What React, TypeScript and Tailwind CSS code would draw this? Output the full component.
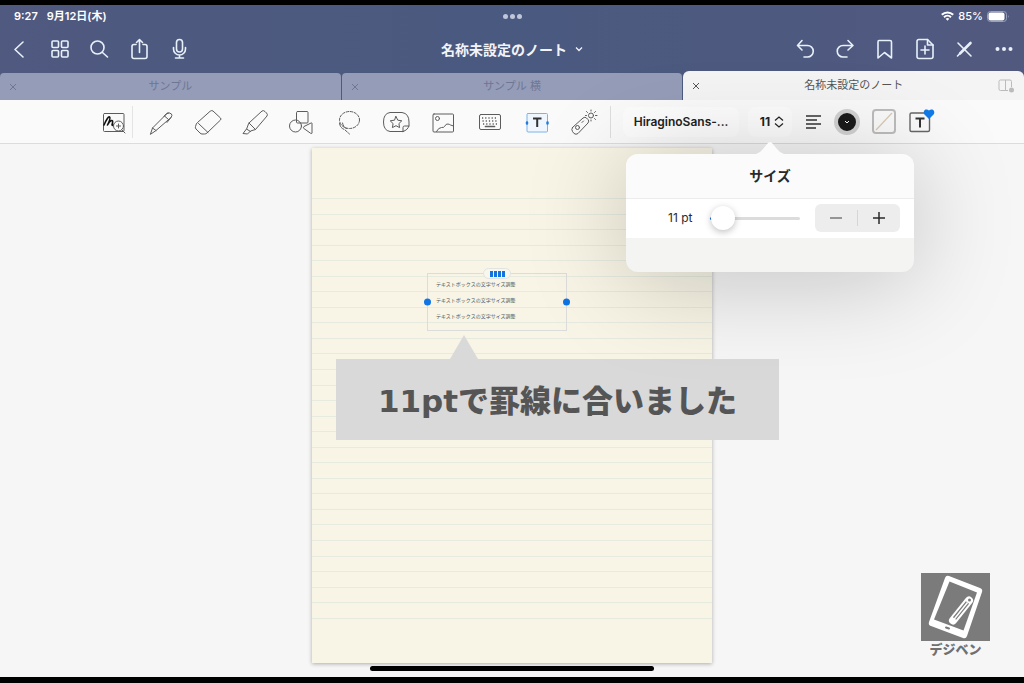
import { useState } from 'react';
import type { ReactNode } from 'react';

type IconProps = {
  children: ReactNode;
  size?: number;
  stroke?: number;
};

const Icon = ({ children, size = 28, stroke = 1 }: IconProps) => (
  <svg
    width={size}
    height={size}
    viewBox="0 0 28 28"
    fill="none"
    stroke="currentColor"
    strokeWidth={stroke}
    strokeLinecap="round"
    strokeLinejoin="round"
    className="shrink-0"
    aria-hidden="true"
  >
    {children}
  </svg>
);

const leftActions = [
  { label: '戻る', icon: <path d="M17 7l-8 7.500 8 7.500" /> },
  {
    label: 'サムネール',
    icon: (
      <>
        <rect x="6" y="6" width="6.500" height="6.500" rx="1" />
        <rect x="15.500" y="6" width="6.500" height="6.500" rx="1" />
        <rect x="6" y="15.500" width="6.500" height="6.500" rx="1" />
        <rect x="15.500" y="15.500" width="6.500" height="6.500" rx="1" />
      </>
    ),
  },
  {
    label: '検索',
    icon: (
      <>
        <circle cx="11.500" cy="12.500" r="6.500" />
        <path d="M16.500 17.500l5 4.500" />
      </>
    ),
  },
  {
    label: '共有',
    icon: (
      <>
        <path d="M10 9.500H8Q6 9.500 6 11.500V21.500Q6 23.500 8 23.500H19Q21 23.500 21 21.500V11.500Q21 9.500 19 9.500H17" />
        <path d="M13.500 17.500V4.500M10.500 7.500l3-3 3 3" />
      </>
    ),
  },
  {
    label: '録音',
    icon: (
      <>
        <rect x="10.500" y="4.500" width="6" height="12.500" rx="3" />
        <path d="M7.500 12.500v1.500a6 6 0 0012 0v-1.500M13.500 20v3M9.500 23h8" />
      </>
    ),
  },
];

const rightActions = [
  { label: '取り消す', icon: <path d="M12 5.500L7.500 10.500l4.500 4.500M7.500 10.500h10a5.500 5.500 0 010 11.500H14" /> },
  { label: 'やり直す', icon: <path d="M18 5.500l5 5-5 4.500M23 10.500H13a5.500 5.500 0 000 11.500H17" /> },
  { label: 'ブックマーク', icon: <path d="M9 5.500H20Q21.500 5.500 21.500 7V23L14.500 17.500 8 23V7Q8 5.500 9 5.500z" /> },
  {
    label: 'ページを追加',
    icon: (
      <>
        <path d="M8.500 4.500H17.500L23 10V21.500Q23 23.500 21 23.500H9Q7 23.500 7 21.500V6.500Q7 4.500 9 4.500z" />
        <path d="M17.500 4.500V10H23M15 11v8M11 15h8" />
      </>
    ),
  },
  {
    label: '編集モード',
    icon: (
      <>
        <path d="M8 8l13 13" />
        <path d="M20.500 8L10 18.500" strokeWidth="2.600" />
        <path d="M9 19.500l-1.500 1.500" />
      </>
    ),
  },
  {
    label: 'その他',
    icon: (
      <g fill="currentColor" stroke="none">
        <circle cx="7.500" cy="14" r="2" />
        <circle cx="14" cy="14" r="2" />
        <circle cx="20.500" cy="14" r="2" />
      </g>
    ),
  },
];

const tools = [
  {
    label: 'ペン',
    icon: (
      <path d="M3.500 26l2-6L19.500 6q2.500-2.500 5 0 1 1.500-.5 3.500L9 22.500zM5.500 20l3.500 2.500M17.500 8l4 3.500M17 8.500l2.500-3q1-1 2-.5M24 9.500l-4 5" />
    ),
  },
  {
    label: '消しゴム',
    icon: (
      <path d="M16.500 3q1.500-1 2.500 0l7.500 7q1 1 0 2L13 25q-1 1-2.500 1H8q-1 0-2-1l-4-4q-1-1-.5-2.500l.5-1.500q0-1 1-2zM4.500 15.500l9.500 9" />
    ),
  },
  {
    label: '蛍光ペン',
    icon: (
      <path d="M8 15L21 3q1.500-1 3 .5l1.500 1.500q1.500 1.500.5 3L14.500 21.500l-5 1.500-3 3-4.500-.5 3.500-4.500zM8 15l6.500 6.500M5.500 21l4 2.500" />
    ),
  },
  {
    label: '図形',
    icon: (
      <>
        <rect x="8.500" y="3.500" width="11.500" height="11.500" rx="1" />
        <circle cx="7.500" cy="18" r="6" />
        <path d="M15.500 20q-.5-1 .5-1.500l7-3.500q1-.5 1 .5V25q0 1-1 .5z" />
      </>
    ),
  },
  {
    label: 'なげなわ',
    icon: (
      <>
        <ellipse cx="14.500" cy="12" rx="10" ry="8.500" strokeDasharray="2.500 1.500" />
        <path d="M4.500 15.500q1 5 5 6l5 4.500M7.500 15q1 4.500 4 5.500" strokeDasharray="3 1.500" />
      </>
    ),
  },
  {
    label: 'ステッカー',
    icon: (
      <>
        <path d="M21 23.500H8q-6.500-1-6.500-9.500T8 4.500H20Q27 5.500 27 14v3.500q-1 4.500-6 6zM21 23.500V19.500q0-1.500 1.500-1.500H27" />
        <path d="M14 8.500l1.800 3.700 4 .6-2.900 2.800.7 4-3.600-1.900-3.600 1.900.7-4-2.900-2.800 4-.6z" />
      </>
    ),
  },
  {
    label: '画像',
    icon: (
      <>
        <rect x="4" y="6" width="20.500" height="18" rx="1" />
        <circle cx="8.500" cy="10.500" r="2" />
        <path d="M7.500 23.500q2-4 5-4t3 -1q1.500-3 3.500-2.500t2.500 1l3 1" />
      </>
    ),
  },
  {
    label: 'キーボード',
    icon: (
      <>
        <rect x="3.500" y="6.500" width="21" height="15" rx="1.500" />
        <path d="M6 10h16M6.500 13h15M7 16h15" strokeWidth="1.700" strokeDasharray="1.200 2" strokeLinecap="butt" />
        <path d="M9.500 18.500h9" strokeWidth="1.700" />
      </>
    ),
  },
  {
    label: 'テキスト',
    icon: (
      <>
        <rect x="4" y="5.500" width="20.500" height="18.500" rx="1" className="fill-[#eff6fd] stroke-[#7db2e8]" />
        <path d="M10 10.500h8.500M14.200 10.500v8.500" strokeWidth="2" strokeLinecap="butt" className="stroke-[#333]" />
        <path d="M4 14.500v1M24.500 14.500v1" strokeWidth="2.500" className="stroke-[#1f7be0]" />
      </>
    ),
  },
  {
    label: 'レーザーポインター',
    icon: (
      <>
        <path d="M2.500 19.500L13 10q2-1.500 3.500 0l1.500 1.500q1.500 1.500 0 3.500L8 25.500q-2 1.500-4 0l-1.500-2q-1.500-2 0-4z" />
        <circle cx="7.500" cy="19.500" r="2" />
        <path d="M12 14.500l1.500-1.500" />
        <circle cx="21" cy="7.500" r="2.500" />
        <path d="M21 3V2M24.500 4.500l1-1M25.500 7.500h1.500M24.500 10.500l1 1M17.500 4.500l-1-1M16.500 7.500h-1M21 12v1" />
      </>
    ),
  },
];

const tabs = [
  { title: 'サンプル', active: false },
  { title: 'サンプル 横', active: false },
  { title: '名称未設定のノート', active: true },
];

const noteLines = ['テキストボックスの文字サイズ調整', 'テキストボックスの文字サイズ調整', 'テキストボックスの文字サイズ調整'];

const StatusBar = () => (
  <div className="grid grid-cols-[1fr_auto_1fr] items-center h-[22px] px-[14px] text-[11px] font-semibold">
    <div className="flex gap-[9px]">
      <span>9:27</span>
      <span>9月12日(木)</span>
    </div>
    <div className="flex gap-[2px]">
      <i className="size-[5px] rounded-full bg-[#bfc6da]" />
      <i className="size-[5px] rounded-full bg-[#bfc6da]" />
      <i className="size-[5px] rounded-full bg-[#bfc6da]" />
    </div>
    <div className="flex items-center justify-end gap-1">
      <svg width="13" height="10" viewBox="0 0 13 10" fill="none" stroke="currentColor" strokeWidth="2" aria-hidden="true">
        <path d="M.8 3.800a8.200 8.200 0 0111.400 0M3 6.200a5 5 0 017 0" />
        <path d="M4.700 7.800L6.500 9.800l1.800-2a2.600 2.600 0 00-3.600 0z" fill="currentColor" stroke="none" />
      </svg>
      <span className="font-medium">85%</span>
      <svg width="23" height="11" viewBox="0 0 23 11" aria-hidden="true">
        <rect x=".5" y=".5" width="19" height="10" rx="3" fill="none" stroke="#98a1bf" />
        <rect x="1.500" y="1.500" width="16" height="8" rx="2" fill="#fff" />
        <path d="M21 4q1.500 1.500 0 3z" fill="#98a1bf" />
      </svg>
    </div>
  </div>
);

const NavBar = () => (
  <div className="grid grid-cols-[1fr_auto_1fr] items-center h-11 text-[#e8f0fa]">
    <div className="flex">
      {leftActions.map((a) => (
        <button key={a.label} aria-label={a.label} className="w-10 flex justify-center">
          <Icon stroke={1.6}>{a.icon}</Icon>
        </button>
      ))}
    </div>
    <button className="flex items-center gap-2 px-9 text-[14px] font-bold text-[#f2f4f9]">
      名称未設定のノート
      <svg width="8" height="6" viewBox="0 0 8 6" fill="none" stroke="currentColor" strokeWidth="1.300" aria-hidden="true">
        <path d="M1 1.500l3 3 3-3" />
      </svg>
    </button>
    <div className="flex justify-end">
      {rightActions.map((a) => (
        <button key={a.label} aria-label={a.label} className="w-10 flex justify-center">
          <Icon stroke={1.6}>{a.icon}</Icon>
        </button>
      ))}
    </div>
  </div>
);

const CloseIcon = () => (
  <svg width="8" height="8" viewBox="0 0 8 8" stroke="currentColor" aria-hidden="true">
    <path d="M1 1l6 6M7 1L1 7" />
  </svg>
);

const Tabs = () => (
  <div className="flex items-end h-[29px] gap-px">
    {tabs.map((tab) => (
      <div
        key={tab.title}
        className={
          tab.active
            ? 'flex flex-1 items-center h-full rounded-t-md bg-[#f4f4f5] text-[#555]'
            : 'flex flex-1 items-center h-[27px] rounded-t-sm bg-[#949cb8] text-[#6e7694]'
        }
      >
        <button aria-label={`${tab.title}を閉じる`} className="w-[26px] flex justify-center">
          <CloseIcon />
        </button>
        <span className="flex-1 text-center text-[11px]">{tab.title}</span>
        {tab.active ? (
          <button aria-label="分割表示" className="w-[26px] text-[#bbb]">
            <svg width="17" height="14" viewBox="0 0 17 14" fill="none" stroke="currentColor" aria-hidden="true">
              <path d="M10 11.500H2.500Q1 11.500 1 10V2.500Q1 1 2.500 1H12Q13.500 1 13.500 2.500V8M7.500 1v10.500" />
              <circle cx="13.500" cy="11" r="2.500" fill="currentColor" stroke="none" />
            </svg>
          </button>
        ) : (
          <span className="w-[26px]" />
        )}
      </div>
    ))}
  </div>
);

type SizePopoverProps = {
  size: number;
  onChange: (size: number) => void;
};

const SizePopover = ({ size, onChange }: SizePopoverProps) => (
  <div className="absolute z-20 top-[47px] left-1/2 -translate-x-1/2 w-72 rounded-xl bg-[#f4f4f3] text-[#2a2a2a] shadow-[0_8px_100px_rgba(0,0,0,0.22)]">
    <svg width="28" height="13" viewBox="0 0 28 13" className="absolute bottom-full left-1/2 -translate-x-1/2" aria-hidden="true">
      <path d="M0 13Q4 12 7 8L12 2Q14 0 16 2L21 8Q24 12 28 13z" fill="#fbfbfb" />
    </svg>
    <h2 className="h-11 flex items-center justify-center rounded-t-xl bg-[#fbfbfb] text-[14px] font-bold">サイズ</h2>
    <div className="h-10 flex items-center border-t border-[#ececec] bg-white pl-[42px] pr-[14px]">
      <label htmlFor="font-size" className="w-[42px] text-xs">
        {size} pt
      </label>
      <input
        id="font-size"
        type="range"
        min={10}
        max={72}
        value={size}
        onChange={(e) => onChange(Number(e.target.value))}
        className="w-[90px] h-[3px] appearance-none rounded-full bg-linear-to-r from-[#1667d9] from-3% to-[#dcdcdf] to-3% [&::-webkit-slider-thumb]:appearance-none [&::-webkit-slider-thumb]:size-6 [&::-webkit-slider-thumb]:rounded-full [&::-webkit-slider-thumb]:bg-white [&::-webkit-slider-thumb]:shadow-[0_2px_7px_rgba(0,0,0,0.25)]"
      />
      <div className="ml-auto flex items-center h-7 w-[85px] rounded-md bg-[#ededee]">
        <button aria-label="小さく" onClick={() => onChange(size - 1)} className="flex-1 flex justify-center text-[#777]">
          <svg width="14" height="14" viewBox="0 0 14 14" stroke="currentColor" strokeWidth="1.500" aria-hidden="true">
            <path d="M1 7h12" />
          </svg>
        </button>
        <span className="w-px h-4 bg-[#d6d6d8]" />
        <button aria-label="大きく" onClick={() => onChange(size + 1)} className="flex-1 flex justify-center">
          <svg width="14" height="14" viewBox="0 0 14 14" stroke="currentColor" strokeWidth="1.500" aria-hidden="true">
            <path d="M1 7h12M7 1v12" />
          </svg>
        </button>
      </div>
    </div>
    <div className="h-[34px]" />
  </div>
);

const Toolbar = () => {
  const [size, setSize] = useState(11);

  return (
    <div className="relative z-10 h-11 flex items-center justify-center pl-[10px] bg-[#fafafa] border-b border-[#dcdcdc] text-[#5c5c5c]">
      <button aria-label="拡大ウインドウ" className="w-8 shrink-0 flex justify-center">
        <Icon>
          <rect x="3.500" y="5.500" width="20.500" height="18" rx="1" />
          <path d="M4 17q4-9 5.500-8t-2 8q2-4 4-4.500t.5 4.500q1 1 2-.5" strokeWidth="1.600" className="stroke-[#111]" />
          <circle cx="18.500" cy="18" r="5" className="fill-[#fafafa]" />
          <path d="M22 22l3 3M16.500 18h4M18.500 16v4" />
        </Icon>
      </button>
      <span className="w-px h-8 ml-[2px] mr-1 bg-[#e4e4e4]" />
      {tools.map((t) => (
        <button key={t.label} aria-label={t.label} className="w-[47px] shrink-0 flex justify-center">
          <Icon>{t.icon}</Icon>
        </button>
      ))}
      <span className="w-px h-8 ml-[3px] mr-3 bg-[#dedede]" />
      <button className="w-[116px] h-[30px] shrink-0 rounded-lg bg-[#fdfdfd] text-xs font-semibold text-[#222]">HiraginoSans-...</button>
      <div className="relative ml-[9px]">
        <button className="flex items-center justify-center gap-1 w-11 h-[30px] pl-1 rounded-lg bg-[#fdfdfd] text-xs font-bold text-[#222]">
          {size}
          <svg width="10" height="12" viewBox="0 0 10 12" fill="none" stroke="currentColor" strokeWidth="1.200" aria-hidden="true">
            <path d="M1 4.500L5 1l4 3.500M1 7.500L5 11l4-3.500" />
          </svg>
        </button>
        <SizePopover size={size} onChange={setSize} />
      </div>
      <button aria-label="行揃え" className="ml-[14px] shrink-0 text-[#333]">
        <svg width="16" height="14" viewBox="0 0 16 14" stroke="currentColor" strokeWidth="1.300" aria-hidden="true">
          <path d="M0 1h15M0 5h11M0 9h15M0 13h10" />
        </svg>
      </button>
      <button aria-label="文字の色" className="ml-3 size-[26px] shrink-0 flex items-center justify-center rounded-full border-4 border-[#d2d2d2] bg-[#1b1b1b] text-white">
        <svg width="6" height="4" viewBox="0 0 6 4" fill="none" stroke="currentColor" aria-hidden="true">
          <path d="M1 1l2 2 2-2" />
        </svg>
      </button>
      <button aria-label="背景色" className="ml-3 shrink-0">
        <svg width="24" height="25" viewBox="0 0 24 25" fill="none" aria-hidden="true">
          <rect x="1" y="1" width="22" height="23" rx="3" stroke="#bdbdbd" strokeWidth="2" />
          <path d="M4 21L20 4" stroke="#d8cbb5" strokeWidth="1.200" />
        </svg>
      </button>
      <button aria-label="テキストスタイル" className="ml-3 shrink-0">
        <svg width="28" height="28" viewBox="0 0 28 28" fill="none" aria-hidden="true">
          <rect x="2" y="5" width="19.500" height="18.500" rx="1.500" stroke="#666" strokeWidth="1.400" />
          <path d="M7.500 10.500h9M12 10.500v9" stroke="#333" strokeWidth="2" />
          <path d="M21 11l-5-5q-1-3 1.500-4.500 2-.5 3.500 1 1.500-1.500 3.500-1 2.500 1.500 1.500 4.500z" fill="#117be8" />
        </svg>
      </button>
    </div>
  );
};

const SelectedTextBox = () => (
  <div className="absolute top-[125px] left-[115px] w-[140px] border border-[#dcdcdc] pt-[3px] pb-[5px] pl-2 text-[5px] text-[#555]">
    <div className="absolute -top-[6px] left-1/2 -translate-x-1/2 flex items-center justify-center gap-[1px] w-7 h-[11px] rounded-full border border-[#e2e4e2] bg-[#f7f7ee]">
      <i className="w-[3px] h-[6px] bg-[#1473dd]" />
      <i className="w-[3px] h-[6px] bg-[#1473dd]" />
      <i className="w-[3px] h-[6px] bg-[#1473dd]" />
      <i className="w-[3px] h-[6px] bg-[#1473dd]" />
    </div>
    <i className="absolute top-1/2 -left-1 -translate-y-1/2 size-[7px] rounded-full bg-[#0f74e4]" />
    <i className="absolute top-1/2 -right-1 -translate-y-1/2 size-[7px] rounded-full bg-[#0f74e4]" />
    {noteLines.map((line, i) => (
      <p key={i} className="h-4 leading-[14px] whitespace-nowrap">
        {line}
      </p>
    ))}
  </div>
);

const Callout = () => (
  <div className="absolute top-[211px] left-6 w-[443px] h-[81px] pt-1 flex items-center justify-center bg-[#d9d9d9]">
    <svg width="28" height="24" viewBox="0 0 28 24" className="absolute bottom-full left-[114px]" aria-hidden="true">
      <path d="M14 0l14 24H0z" fill="#d9d9d9" />
    </svg>
    <p className="font-['DejaVu_Sans','Noto_Sans_CJK_JP',sans-serif] text-[31px] font-black whitespace-nowrap text-[#555]">
      11ptで罫線に合いました
    </p>
  </div>
);

const NotePage = () => (
  <div className="relative w-[400px] shrink-0 pt-[50px] pb-11 bg-[#f8f5e6] shadow-[0_1px_4px_rgba(0,0,0,0.3)]">
    <div className="flex flex-col justify-between h-[421px]">
      {Array.from({ length: 28 }, (_, i) => (
        <hr key={i} className="border-[#e6eadf]" />
      ))}
    </div>
    <SelectedTextBox />
    <Callout />
  </div>
);

const Logo = () => (
  <div className="absolute right-[34px] bottom-5 flex flex-col items-center">
    <svg width="69" height="68" viewBox="0 0 69 68" fill="none" aria-hidden="true">
      <rect width="69" height="68" fill="#7b7b7b" />
      <path d="M28 3L59 15q3 1 2 4L46 63q-1 3-4 2L10 53q-3-1-2-4L24 5q1-3 4-2z" fill="#fff" />
      <path d="M28.500 8.500L56 19.500 42.500 57.500 13 46.500z" fill="#7b7b7b" />
      <path d="M25 54.500l3 1" stroke="#7b7b7b" strokeWidth="2" strokeLinecap="round" />
      <path d="M32 47.500L48 27.500" stroke="#fff" strokeWidth="8" strokeLinecap="round" />
      <path d="M33.500 45.500L46.500 29.500" stroke="#7b7b7b" strokeWidth="4" />
      <path d="M32.500 47L46.500 29.500" stroke="#fff" strokeWidth="1.500" />
      <circle cx="48.500" cy="27" r="1.500" fill="#7b7b7b" />
    </svg>
    <span className="text-[13px] leading-4 font-black text-[#707070]">デジベン</span>
  </div>
);

export default function App() {
  return (
    <div className="min-h-screen flex flex-col overflow-hidden border-t-[5px] border-b-[6px] border-black bg-[#f6f6f7] font-[Inter,'Noto_Sans_CJK_JP',sans-serif]">
      <header className="bg-linear-to-r from-[#50597f] via-[#4a5980] to-[#52597f] text-white">
        <StatusBar />
        <NavBar />
        <Tabs />
      </header>
      <Toolbar />
      <main className="relative flex-1 flex flex-col items-center pt-1">
        <NotePage />
        <div className="mt-[3px] w-[284px] h-[5px] rounded-full bg-black" />
        <Logo />
      </main>
    </div>
  );
}
